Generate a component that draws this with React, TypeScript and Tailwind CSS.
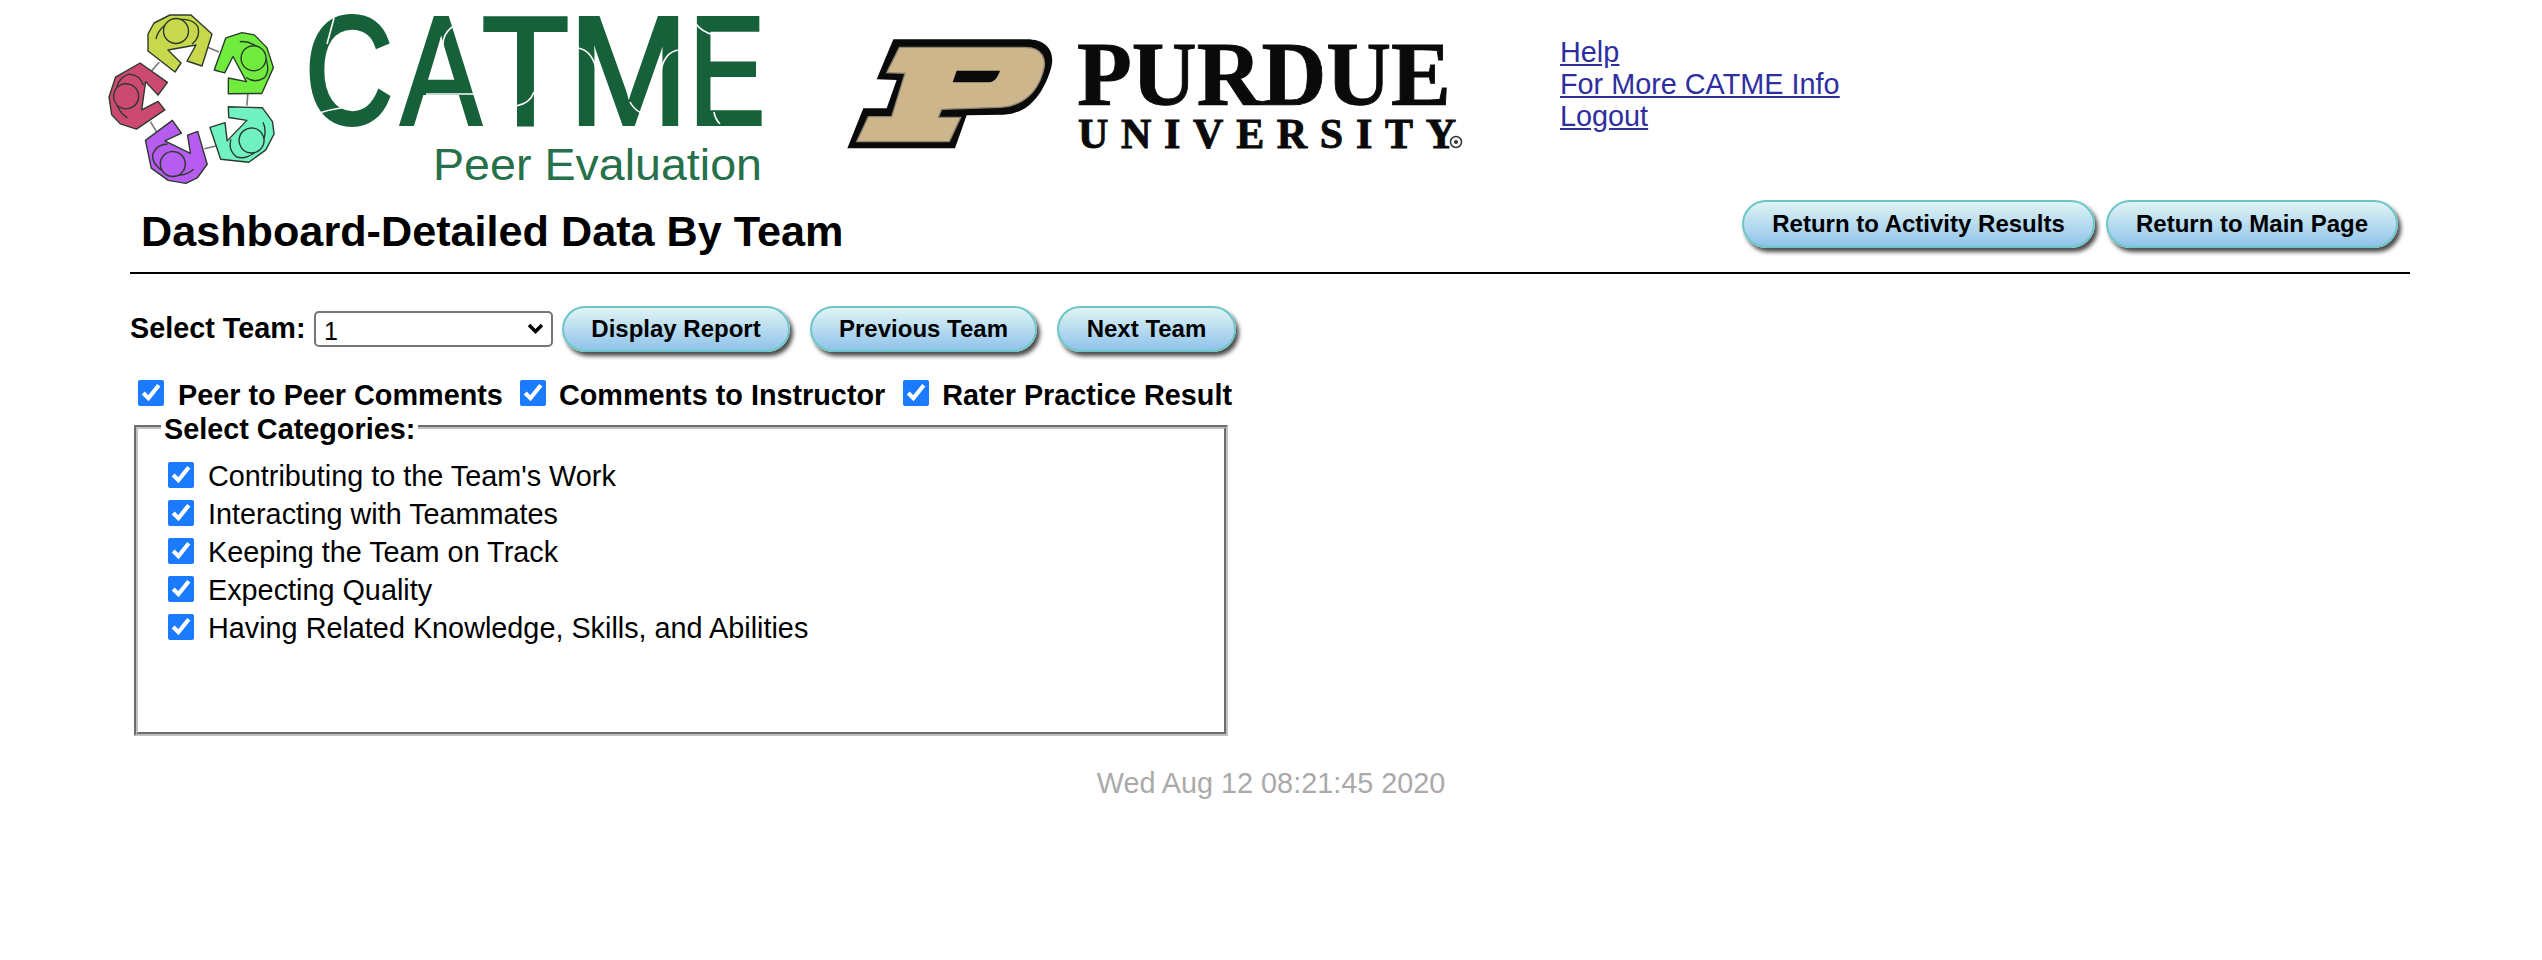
import type { ReactNode } from "react";

const FIGURES = [
  { color: "#c8d84c", angle: 0 },
  { color: "#70ec3e", angle: 72 },
  { color: "#70f2c4", angle: 144 },
  { color: "#b65cf0", angle: 216 },
  { color: "#cc4a72", angle: 288 },
];

const CATEGORIES = [
  "Contributing to the Team's Work",
  "Interacting with Teammates",
  "Keeping the Team on Track",
  "Expecting Quality",
  "Having Related Knowledge, Skills, and Abilities",
];

function CatmeLogo() {
  return (
    <svg viewBox="100 0 680 190" className="w-[680px] h-[190px] shrink-0 ml-[100px]">
      {/* people round the table */}
      <g className="blur-[0.4px]">
        {FIGURES.map((f) => (
          <g key={f.angle} transform={`rotate(${f.angle} 196 98)`}>
            <path d="M207 47 L219 52" stroke="#777" strokeWidth="1.6" />
            <g transform="translate(176 31)" stroke="#2c3a2c" strokeWidth="1.4" strokeLinejoin="round" fill={f.color}>
              <path d="M-22 -8 L-6 -16 L15 -16 L36 3 L26 35 L11 30 L20 14 L-8 19 L5 32 L-1 41 L-28 20 L-28 3 Z" />
              <path d="M-20 8 C-16 -12 14 -18 22 -4 C24 4 20 10 16 13" fill="none" />
              <circle cx="0" cy="0" r="12.5" />
            </g>
          </g>
        ))}
      </g>
      {/* wordmark */}
      <g
        fill="#17613a"
        stroke="#17613a"
        strokeWidth="4"
        fontFamily="'Liberation Sans', Arial, sans-serif"
        fontSize="154"
      >
        <text x="305" y="124" textLength="88" lengthAdjust="spacingAndGlyphs">C</text>
        <text x="401" y="124" textLength="80" lengthAdjust="spacingAndGlyphs">A</text>
        <text x="482" y="124" textLength="87" lengthAdjust="spacingAndGlyphs">T</text>
        <text x="569" y="124" textLength="119" lengthAdjust="spacingAndGlyphs">M</text>
        <text x="689" y="124" textLength="76" lengthAdjust="spacingAndGlyphs">E</text>
      </g>
      {/* the stencil cuts in the letters */}
      <g fill="none" stroke="#fff" strokeWidth="1.6">
        <path d="M334 18 L327 44" />
        <path d="M319 113 C335 108 350 106 366 106" />
        <path d="M455 25 C442 33 441 45 445 55" />
        <path d="M426 94 L476 94" />
        <path d="M516 106 C527 104 532 98 534 92" />
        <path d="M578 48 C590 50 595 62 597 72" />
        <path d="M680 50 C668 50 662 62 661 72" />
        <path d="M630 102 C634 110 640 112 641 113" />
        <path d="M696 24 C702 32 710 34 714 35" />
        <path d="M714 112 C715 118 717 121 720 124" />
      </g>
      <text
        x="433"
        y="180"
        fontSize="44"
        fill="#26704a"
        fontFamily="'Liberation Sans', Arial, sans-serif"
        textLength="329"
        lengthAdjust="spacingAndGlyphs"
      >
        Peer Evaluation
      </text>
    </svg>
  );
}

function PurdueLogo() {
  return (
    <svg viewBox="840 30 630 130" className="w-[630px] h-[130px] shrink-0 ml-[60px] mt-[30px]">
      <g transform="translate(840 30) scale(0.3333)" className="blur-[0.4px]">
        <path
          d="M160 28 L560 28 C625 28 650 70 630 125 C605 200 560 252 490 254 L380 256 L345 355 L22 355 L70 235 L140 235 L170 150 L110 148 Z"
          fill="#0a0a0a"
        />
        <path
          d="M178 52 L555 52 C610 52 622 90 608 130 C590 190 545 230 480 232 L305 238 L295 262 L362 262 L328 335 L50 335 L85 260 L155 260 L195 130 L140 128 Z"
          fill="#cdb68c"
          stroke="#8d8472"
          strokeWidth="4"
        />
        <path d="M350 122 L480 122 C470 150 460 157 440 157 L338 157 Z" fill="#0a0a0a" />
      </g>
      <g
        fill="#0a0a0a"
        stroke="#0a0a0a"
        strokeWidth="0.9"
        fontFamily="'Liberation Serif', 'Times New Roman', serif"
        fontWeight="700"
      >
        <text x="1077" y="105" fontSize="92" textLength="374" lengthAdjust="spacingAndGlyphs">
          PURDUE
        </text>
        <text x="1078" y="148" fontSize="42" textLength="378" lengthAdjust="spacing">
          UNIVERSITY
        </text>
      </g>
      <circle cx="1456" cy="142" r="5.5" fill="none" stroke="#333" strokeWidth="1.5" />
      <circle cx="1456" cy="142" r="2" fill="#333" />
    </svg>
  );
}

function PillButton({ children, className }: { children: ReactNode; className: string }) {
  return (
    <button
      type="button"
      className={`shrink-0 rounded-full border-2 border-[#6cc6c6] bg-linear-to-b from-[#e0f4f3] to-[#90c3ea] shadow-[3px_4px_4px_#4a4a4a] text-[24px] font-bold text-black text-center ${className}`}
    >
      {children}
    </button>
  );
}

function Check({ className = "" }: { className?: string }) {
  return (
    <input
      type="checkbox"
      defaultChecked
      className={`w-[26px] h-[26px] shrink-0 accent-[#1a7bff] ${className}`}
    />
  );
}

export default function App() {
  return (
    <div className="min-h-[960px] bg-white text-black font-['Liberation_Sans',Arial,sans-serif]">
      {/* logos and links */}
      <div className="flex items-start h-[190px]">
        <CatmeLogo />
        <PurdueLogo />
        <div className="ml-[90px] mt-[36px] flex flex-col text-[28.8px] leading-[32px] text-[#2e2e9e] underline">
          <a href="#help">Help</a>
          <a href="#info">For More CATME Info</a>
          <a href="#logout">Logout</a>
        </div>
      </div>

      {/* title */}
      <div className="flex items-start justify-between pl-[141px] pr-[144px] pt-[10px] h-[82px]">
        <h1 className="text-[43.2px] leading-[50px] font-bold mt-[6px]">Dashboard-Detailed Data By Team</h1>
        <div className="flex gap-[11px]">
          <PillButton className="w-[353px] h-[48px]">Return to Activity Results</PillButton>
          <PillButton className="w-[292px] h-[48px]">Return to Main Page</PillButton>
        </div>
      </div>
      <hr className="ml-[130px] mr-[132px] border-t-2 border-black" />

      {/* team picker */}
      <div className="flex items-center ml-[130px] mt-[32px] h-[46px]">
        <span className="text-[28.8px] font-bold w-[184px]">Select Team:</span>
        <div className="relative w-[239px] h-[36px]">
          <select
            className="appearance-none w-full h-full text-[25px] pl-[8px] pb-[2px] bg-white border-2 border-[#767676] rounded-[5px]"
            defaultValue="1"
          >
            <option>1</option>
          </select>
          <svg viewBox="0 0 17 11" className="absolute right-[9px] top-[12px] w-[17px] h-[11px]">
            <path d="M2 2 L8.5 8.5 L15 2" fill="none" stroke="#000" strokeWidth="3.4" />
          </svg>
        </div>
        <PillButton className="ml-[9px] w-[228px] h-[46px]">Display Report</PillButton>
        <PillButton className="ml-[20px] w-[227px] h-[46px]">Previous Team</PillButton>
        <PillButton className="ml-[20px] w-[179px] h-[46px]">Next Team</PillButton>
      </div>

      {/* report sections */}
      <div className="flex items-center ml-[138px] mt-[28px] h-[32px] text-[28.8px] font-bold">
        <Check className="mb-[6px]" />
        <span className="ml-[14px]">Peer to Peer Comments</span>
        <Check className="mb-[6px] ml-[17px]" />
        <span className="ml-[13px]">Comments to Instructor</span>
        <Check className="mb-[6px] ml-[18px]" />
        <span className="ml-[13px]">Rater Practice Result</span>
      </div>

      <fieldset className="ml-[134px] mt-[-1px] w-[1094px] h-[325px] border-4 [border-style:groove] border-[#c0c0c0] px-[26px]">
        <legend className="relative top-[2px] text-[28.8px] leading-[32px] font-bold px-[3px] ml-[-3px]">Select Categories:</legend>
        <div className="ml-[4px] mt-[15px] flex flex-col">
          {CATEGORIES.map((c) => (
            <label key={c} className="flex items-center h-[38px] text-[28.8px]">
              <Check className="mb-[4px]" />
              <span className="ml-[14px]">{c}</span>
            </label>
          ))}
        </div>
      </fieldset>

      <p className="mt-[31px] text-center text-[28.8px] leading-[32px] text-[#aaaaaa]">Wed Aug 12 08:21:45 2020</p>
    </div>
  );
}
